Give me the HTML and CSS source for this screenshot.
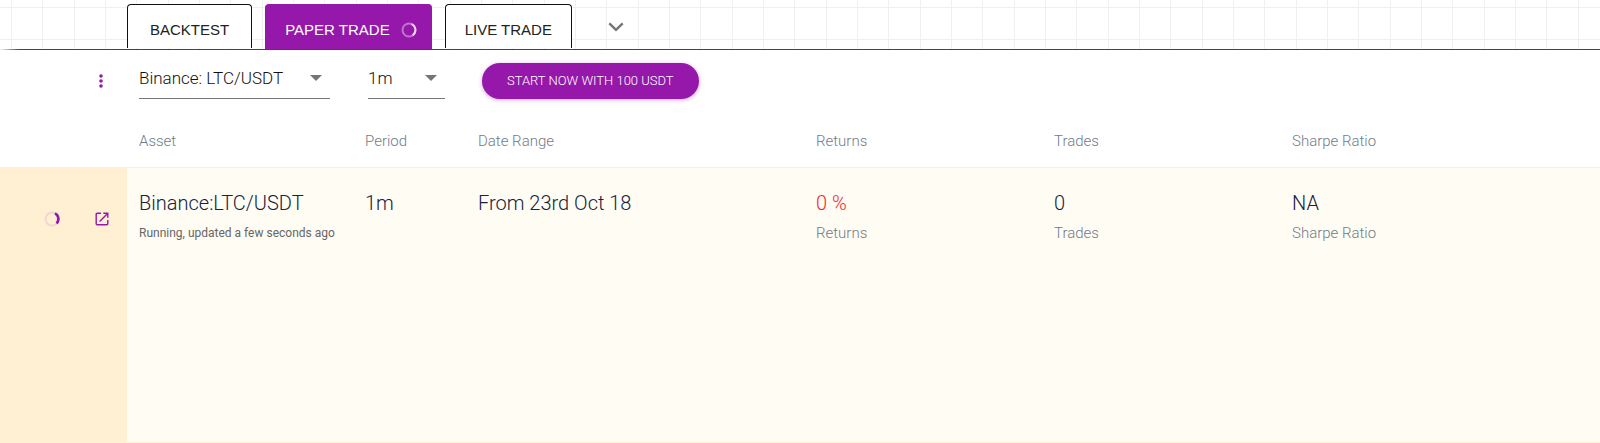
FILE: index.html
```html
<!DOCTYPE html>
<html lang="en">
  <head>
    <meta charset="UTF-8" />
    <title>Paper Trade</title>
    <link rel="stylesheet" href="styles.css">
  </head>
  <body>
    <nav class="tabs">
      <button class="tab">BACKTEST</button>
      <button class="tab active">
        PAPER TRADE
        <svg class="spinner" width="16" height="16" viewBox="0 0 16 16" fill="none" stroke="#fff" stroke-width="2">
          <circle cx="8" cy="8" r="6.5" opacity="0.4" />
          <path d="M10.6 2.1A6.5 6.5 0 0 1 11.6 13.4" opacity="0.7" />
        </svg>
      </button>
      <button class="tab live">LIVE TRADE</button>
      <button class="more" aria-label="More">
        <svg width="16" height="10" viewBox="0 0 16 10" fill="none" stroke="#757575" stroke-width="2.4">
          <path d="M1.3 1.3L8 7.8L14.7 1.3" />
        </svg>
      </button>
    </nav>

    <div class="toolbar">
      <div class="side">
        <button class="icon" aria-label="Options">
          <svg width="12" height="16" viewBox="0 0 12 16" fill="#9618aa">
            <circle cx="6" cy="3" r="1.8" />
            <circle cx="6" cy="8" r="1.8" />
            <circle cx="6" cy="13" r="1.8" />
          </svg>
        </button>
      </div>
      <div class="select asset">
        <select aria-label="Asset">
          <option>Binance: LTC/USDT</option>
        </select>
      </div>
      <div class="select period">
        <select aria-label="Period">
          <option>1m</option>
        </select>
      </div>
      <button class="start">START NOW WITH 100 USDT</button>
    </div>

    <table class="trades">
      <colgroup>
        <col class="col-side">
        <col class="col-asset">
        <col class="col-period">
        <col class="col-range">
        <col class="col-stat">
        <col class="col-stat">
        <col>
      </colgroup>
      <thead>
        <tr>
          <td></td>
          <th>Asset</th>
          <th>Period</th>
          <th>Date Range</th>
          <th>Returns</th>
          <th>Trades</th>
          <th>Sharpe Ratio</th>
        </tr>
      </thead>
      <tbody>
        <tr>
          <td class="actions">
            <div class="side">
              <svg width="16" height="16" viewBox="0 0 16 16" fill="none" stroke="#9618aa">
                <circle cx="8" cy="8" r="6.5" stroke-width="1.8" opacity="0.12" />
                <path d="M11 2.3A6.5 6.5 0 0 1 12.6 12.5" stroke-width="2.6" />
              </svg>
              <button class="icon" aria-label="Open">
                <svg width="14" height="14" viewBox="0 0 14 14" fill="none" stroke="#9618aa" stroke-width="1.4">
                  <path d="M6 1.2H2.2Q1.2 1.2 1.2 2.2V11.8Q1.2 12.8 2.2 12.8H11.8Q12.8 12.8 12.8 11.8V8" />
                  <path d="M8.3 1.2H12.8V5.7M12.6 1.4L4.6 9.4" />
                </svg>
              </button>
            </div>
          </td>
          <td><p class="value">Binance:LTC/USDT</p><p class="status">Running, updated a few seconds ago</p></td>
          <td><p class="value">1m</p></td>
          <td><p class="value">From 23rd Oct 18</p></td>
          <td><p class="value red">0 %</p><p class="label">Returns</p></td>
          <td><p class="value">0</p><p class="label">Trades</p></td>
          <td><p class="value">NA</p><p class="label">Sharpe Ratio</p></td>
        </tr>
      </tbody>
    </table>
  </body>
</html>
```
FILE: styles.css
```css
*{
    margin: 0;
    padding: 0;
    box-sizing: border-box;
}
body{
    background-color: #fff;
    font-family: Roboto, "Liberation Sans", sans-serif;
    font-weight: 300;
}
button{
    border: none;
    background: none;
    cursor: pointer;
}
svg{
    display: block;
}
.tabs{
    display: flex;
    gap: 13px;
    height: 50px;
    padding: 4px 0 0 127px;
    border-bottom: 1px solid;
    border-image: linear-gradient(to right, #fff, #8a129c 20px) 1;
    /* three grid lines in every 94px */
    background-image:
        linear-gradient(to right, #f0f0f0 1px, transparent 1px, transparent 31px, #f0f0f0 31px, #f0f0f0 32px, transparent 32px, transparent 63px, #f0f0f0 63px, #f0f0f0 64px, transparent 64px),
        linear-gradient(#f0f0f0 1px, transparent 1px);
    background-size: 94px 100%, 100% 32px;
    background-position: 11px 0, 0 7px;
}
.tab{
    display: flex;
    align-items: center;
    gap: 11px;
    height: 44px;
    padding: 6px 22px 0;
    border: 1px solid #111;
    border-bottom: none;
    border-radius: 4px 4px 0 0;
    background-color: #fff;
    color: #222;
    font-family: "Liberation Sans", Arial, sans-serif;
    font-size: 15px;
}
.tab.active{
    height: 45px;
    padding: 5px 14px 0 19px;
    border-color: #9618aa;
    background-color: #9618aa;
    color: #fff;
}
.tab.live{
    padding: 6px 19px 0;
}
.more{
    padding: 0 23px;
}
.side{
    display: flex;
    justify-content: flex-end;
    align-items: center;
    gap: 35px;
    padding-right: 18px;
}
.toolbar{
    display: flex;
    align-items: center;
    height: 63px;
    padding-bottom: 2px;
}
.toolbar .side{
    width: 127px;
    padding-right: 20px;
}
.select{
    display: grid;
    align-items: center;
    height: 36px;
    margin-left: 12px;
    border-bottom: 1px solid #757575;
}
.select select{
    grid-area: 1 / 1;
    width: 100%;
    height: 30px;
    margin-bottom: 6px;
    border: none;
    background: none;
    appearance: none;
    color: #111;
    font-family: inherit;
    font-size: 17px;
    font-weight: 300;
}
.select::after{
    content: "";
    grid-area: 1 / 1;
    justify-self: end;
    margin: 0 8px 6px 0;
    border: 6px solid transparent;
    border-top-color: #757575;
    border-bottom: none;
    pointer-events: none;
}
.asset{
    width: 191px;
}
.period{
    width: 77px;
    margin-left: 38px;
}
.start{
    height: 36px;
    margin-left: 37px;
    padding: 0 25px;
    border-radius: 18px;
    background-color: #9618aa;
    box-shadow: 0 1px 4px rgba(150, 24, 170, 0.4);
    color: #fff;
    font-family: inherit;
    font-size: 13px;
    font-weight: 300;
}
.trades{
    width: 100%;
    table-layout: fixed;
    border-collapse: separate;
    border-spacing: 0;
}
.col-side{
    width: 127px;
}
.col-asset{
    width: 226px;
}
.col-period{
    width: 113px;
}
.col-range{
    width: 338px;
}
.col-stat{
    width: 238px;
}
.trades th{
    height: 54px;
    padding: 2px 0 0 12px;
    text-align: left;
    font-size: 15px;
    font-weight: 300;
    color: #717b8a;
}
.trades tbody td{
    height: 276px;
    padding: 20px 0 0 12px;
    border-top: 1px solid #ffefd3;
    border-bottom: 1px solid #ffefd3;
    background-color: #fffcf4;
    vertical-align: top;
}
.trades tbody td.actions{
    padding: 43px 0 0;
    background-color: #ffefd3;
}
.value{
    margin-bottom: 5px;
    line-height: 30px;
    font-size: 20px;
    color: #14233f;
}
.red{
    color: #f8252b;
}
.label{
    line-height: 20px;
    font-size: 15px;
    color: #717b8a;
}
.status{
    line-height: 20px;
    font-size: 12px;
    font-weight: 400;
    color: #666;
}
```
